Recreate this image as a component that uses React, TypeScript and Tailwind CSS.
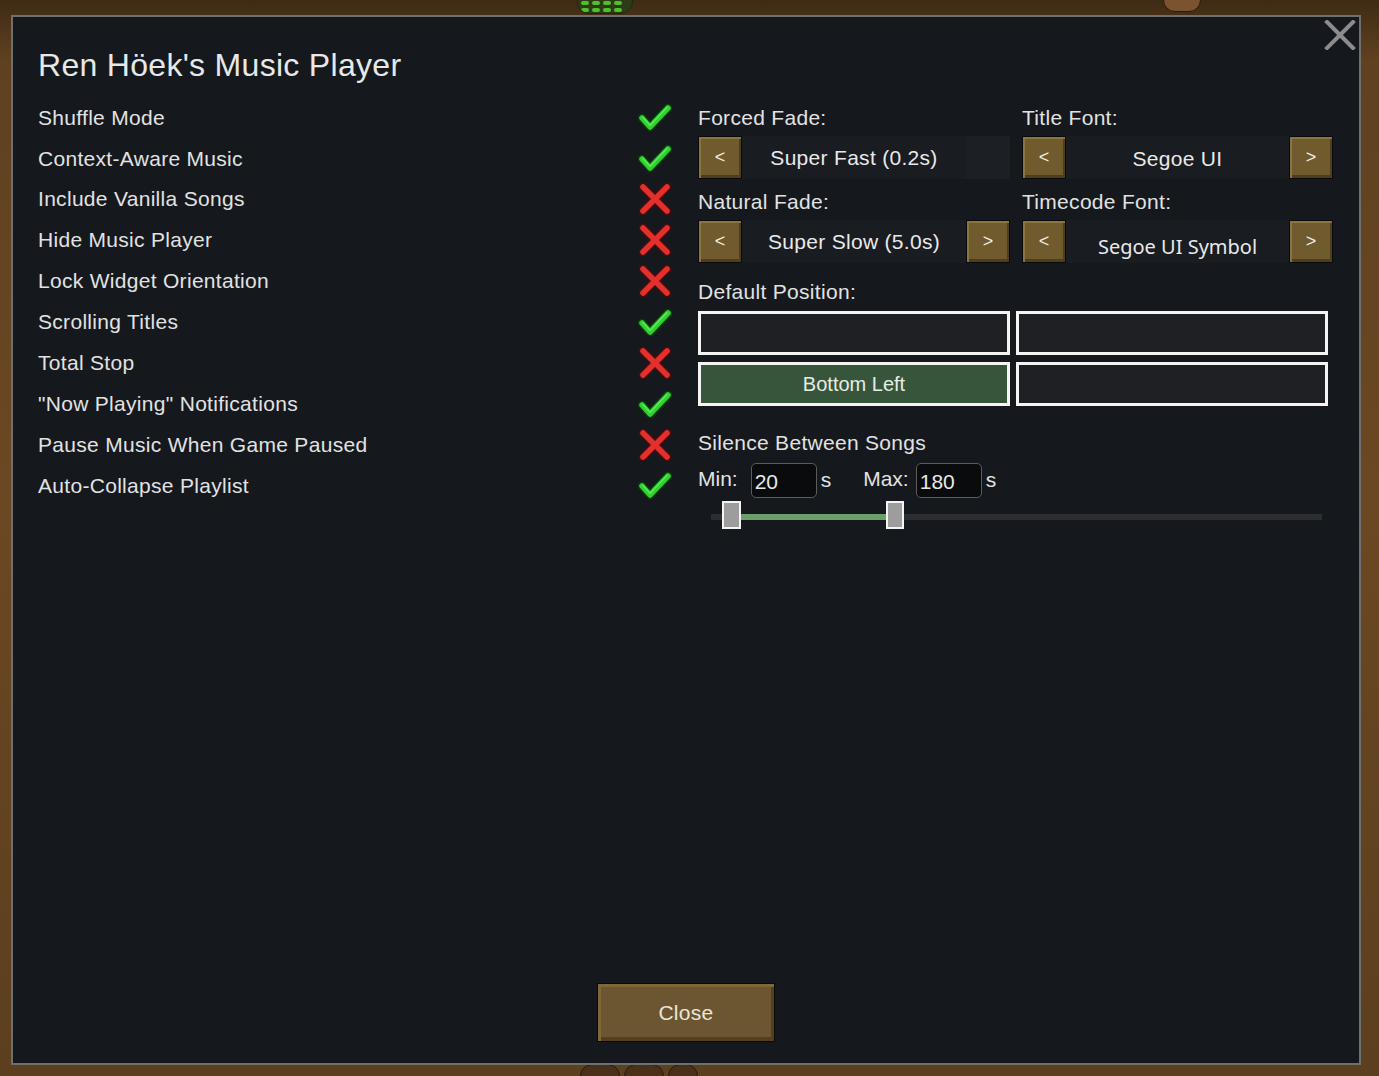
import React from "react";

const leftItems: [string, boolean][] = [
  ["Shuffle Mode", true],
  ["Context-Aware Music", true],
  ["Include Vanilla Songs", false],
  ["Hide Music Player", false],
  ["Lock Widget Orientation", false],
  ["Scrolling Titles", true],
  ["Total Stop", false],
  ['"Now Playing" Notifications', true],
  ["Pause Music When Game Paused", false],
  ["Auto-Collapse Playlist", true],
];

function Check() {
  return (
    <svg width="34" height="30" viewBox="0 0 34 30">
      <path d="M4 16 L12 25 L30 6" fill="none" stroke="#0c3a0c" strokeWidth="8.5" strokeLinecap="round" strokeLinejoin="round" />
      <path d="M4 16 L12 25 L30 6" fill="none" stroke="#2ed12e" strokeWidth="5.5" strokeLinecap="round" strokeLinejoin="round" />
      <path d="M5 15.5 L12 23.5 L29 5.5" fill="none" stroke="#5ee85e" strokeWidth="1.5" strokeLinecap="round" strokeLinejoin="round" />
    </svg>
  );
}

function Cross() {
  return (
    <svg width="34" height="34" viewBox="0 0 34 34">
      <path d="M5 5 L29 29 M29 5 L5 29" fill="none" stroke="#4a0c0c" strokeWidth="8.5" strokeLinecap="round" />
      <path d="M5 5 L29 29 M29 5 L5 29" fill="none" stroke="#e3302c" strokeWidth="5.5" strokeLinecap="round" />
    </svg>
  );
}

function BrownBtn({ label }: { label: string }) {
  return (
    <div className="w-[44px] h-[43px] shrink-0 border border-[#0a0a0a] bg-[#705b2f] shadow-[inset_2px_2px_0_#8a7440,inset_-2px_-3px_0_#4d3e1c] flex items-center justify-center text-[#f2eee2] text-[18px] leading-none pb-[2px]">
      {label}
    </div>
  );
}

function Selector({
  value,
  hasNext = true,
  valueClass = "text-[21px] tracking-[0.3px]",
}: {
  value: string;
  hasNext?: boolean;
  valueClass?: string;
}) {
  return (
    <div className="h-[43px] flex">
      <BrownBtn label="<" />
      <div className={`flex-1 bg-[#191c20] flex items-center justify-center text-[#e9e9e9] ${valueClass}`}>
        {value}
      </div>
      {hasNext ? <BrownBtn label=">" /> : <div className="w-[44px] h-[43px] bg-[#1c1f23]" />}
    </div>
  );
}

function Label({ text, cls = "" }: { text: string; cls?: string }) {
  return (
    <div className={`h-[36px] flex items-center text-[21px] text-[#e2e2e2] tracking-[0.3px] ${cls}`}>{text}</div>
  );
}

export default function App() {
  return (
    <div className="w-[1379px] h-[1076px] relative overflow-hidden bg-[#5a3d1d] bg-[linear-gradient(180deg,#3f2a14_0px,#5f4120_60px,#6a4822_500px,#5c3f1e_1076px)] pt-[15px] pl-[11px] font-['Liberation_Sans',Arial,sans-serif]">
      {/* background decorations */}
      <div className="absolute left-[577px] top-[-10px] w-[56px] h-[24px] rounded-[12px] bg-[#2e3a18] border border-[#1e2a10] flex flex-wrap gap-[3px] p-[3px] pt-[10px] overflow-hidden">
        <span className="w-[8px] h-[4px] rounded-full bg-[#4fbf2a]" />
        <span className="w-[8px] h-[4px] rounded-full bg-[#4fbf2a]" />
        <span className="w-[8px] h-[4px] rounded-full bg-[#4fbf2a]" />
        <span className="w-[8px] h-[4px] rounded-full bg-[#4fbf2a]" />
        <span className="w-[8px] h-[4px] rounded-full bg-[#4fbf2a]" />
        <span className="w-[8px] h-[4px] rounded-full bg-[#4fbf2a]" />
        <span className="w-[8px] h-[4px] rounded-full bg-[#4fbf2a]" />
        <span className="w-[8px] h-[4px] rounded-full bg-[#4fbf2a]" />
      </div>
      <div className="absolute left-[1163px] top-[-12px] w-[38px] h-[24px] rounded-full bg-[#7a5430] border border-[#2a1a0c]" />
      <div className="absolute left-[580px] top-[1064px] w-[40px] h-[20px] rounded-t-[12px] bg-[#4a3018] border border-[#2a1a0c]" />
      <div className="absolute left-[624px] top-[1064px] w-[40px] h-[20px] rounded-t-[12px] bg-[#4a3018] border border-[#2a1a0c]" />
      <div className="absolute left-[668px] top-[1064px] w-[30px] h-[20px] rounded-t-[12px] bg-[#4a3018] border border-[#2a1a0c]" />

      {/* dialog */}
      <div className="w-[1350px] h-[1050px] border-2 border-[#6f6f6f] bg-[#15191d] relative flex flex-col">
        {/* close X */}
        <svg className="absolute right-[3px] top-[3px]" width="32" height="30" viewBox="0 0 32 30">
          <path d="M3 2 L29 28 M29 2 L3 28" stroke="#8c8c8c" strokeWidth="4" strokeLinecap="square" />
        </svg>

        <div className="pl-[25px] mt-[32px] h-[32px] leading-[32px] text-[32px] text-[#e8e8e8] tracking-[0.3px]">
          Ren Höek's Music Player
        </div>

        <div className="flex pl-[25px] mt-[16px]">
          {/* left list */}
          <div className="w-[634px] flex flex-col">
            {leftItems.map(([label, on]) => (
              <div key={label} className="h-[40.9px] flex items-center justify-between">
                <span className="text-[21px] text-[#e2e2e2] tracking-[0.3px]">{label}</span>
                <div className="w-[34px] h-[34px] flex items-center justify-center">
                  {on ? <Check /> : <Cross />}
                </div>
              </div>
            ))}
          </div>

          {/* right column */}
          <div className="ml-[26px] w-[635px] pt-[3px] flex flex-col">
            <div className="grid grid-cols-[312px_311px] gap-x-[12px]">
              <div className="flex flex-col">
                <Label text="Forced Fade:" />
                <Selector value="Super Fast (0.2s)" hasNext={false} />
                <Label text="Natural Fade:" cls="mt-[5px]" />
                <Selector value="Super Slow (5.0s)" />
              </div>
              <div className="flex flex-col">
                <Label text="Title Font:" />
                <Selector value="Segoe UI" valueClass="text-[21px] tracking-[0.3px] pt-[2px]" />
                <Label text="Timecode Font:" cls="mt-[5px]" />
                <Selector
                  value="Segoe UI Symbol"
                  valueClass="pt-[11px] font-['Noto_Sans',sans-serif] text-[20px]"
                />
              </div>
            </div>

            <Label text="Default Position:" cls="mt-[11px]" />
            <div className="mt-[1px] grid grid-cols-[312px_312px] gap-x-[6px] gap-y-[7px]">
              <div className="h-[44px] border-[3px] border-[#f4f4f4] bg-[#1f2023]" />
              <div className="h-[44px] border-[3px] border-[#f4f4f4] bg-[#1f2023]" />
              <div className="h-[44px] border-[3px] border-[#f4f4f4] bg-[#37553a] flex items-center justify-center text-[20px] text-[#e6ece6]">
                Bottom Left
              </div>
              <div className="h-[44px] border-[3px] border-[#f4f4f4] bg-[#1f2023]" />
            </div>

            <Label text="Silence Between Songs" cls="mt-[19px]" />
            <div className="mt-[2px] h-[35px] flex items-center text-[21px] text-[#e2e2e2]">
              <span className="pb-[4px]">Min:</span>
              <div className="ml-[13px] w-[66px] h-[35px] rounded-[5px] border border-[#5c5c5c] bg-[#0a0b0d] pl-[3px] pt-[3px] text-[21px] leading-[30px] text-[#e8e8e8]">
                20
              </div>
              <span className="ml-[4px] pb-[2px]">s</span>
              <span className="ml-[32px] pb-[4px]">Max:</span>
              <div className="ml-[7px] w-[66px] h-[35px] rounded-[5px] border border-[#5c5c5c] bg-[#0a0b0d] pl-[3px] pt-[3px] text-[21px] leading-[30px] text-[#e8e8e8]">
                180
              </div>
              <span className="ml-[4px] pb-[2px]">s</span>
            </div>

            <div className="mt-[3px] h-[28px] relative">
              <div className="absolute left-[13px] right-[11px] top-[13px] h-[6px] bg-[#2c2e31]" />
              <div className="absolute left-[33px] w-[163px] top-[13px] h-[6px] bg-[#6a9e6a]" />
              <div className="absolute left-[24px] top-0 w-[19px] h-[28px] border-2 border-[#f4f4f4] bg-[#9d9d9d]" />
              <div className="absolute left-[188px] top-0 w-[18px] h-[28px] border-2 border-[#f4f4f4] bg-[#9d9d9d]" />
            </div>
          </div>
        </div>

        {/* close button */}
        <div className="mt-auto mb-[21px] self-center w-[178px] h-[59px] border border-[#0a0a0a] bg-[#6c5632] shadow-[inset_3px_3px_0_#7f673a,inset_-3px_-4px_0_#52401f] flex items-center justify-center text-[21px] text-[#ece5d6] tracking-[0.3px]">
          Close
        </div>
      </div>
    </div>
  );
}
